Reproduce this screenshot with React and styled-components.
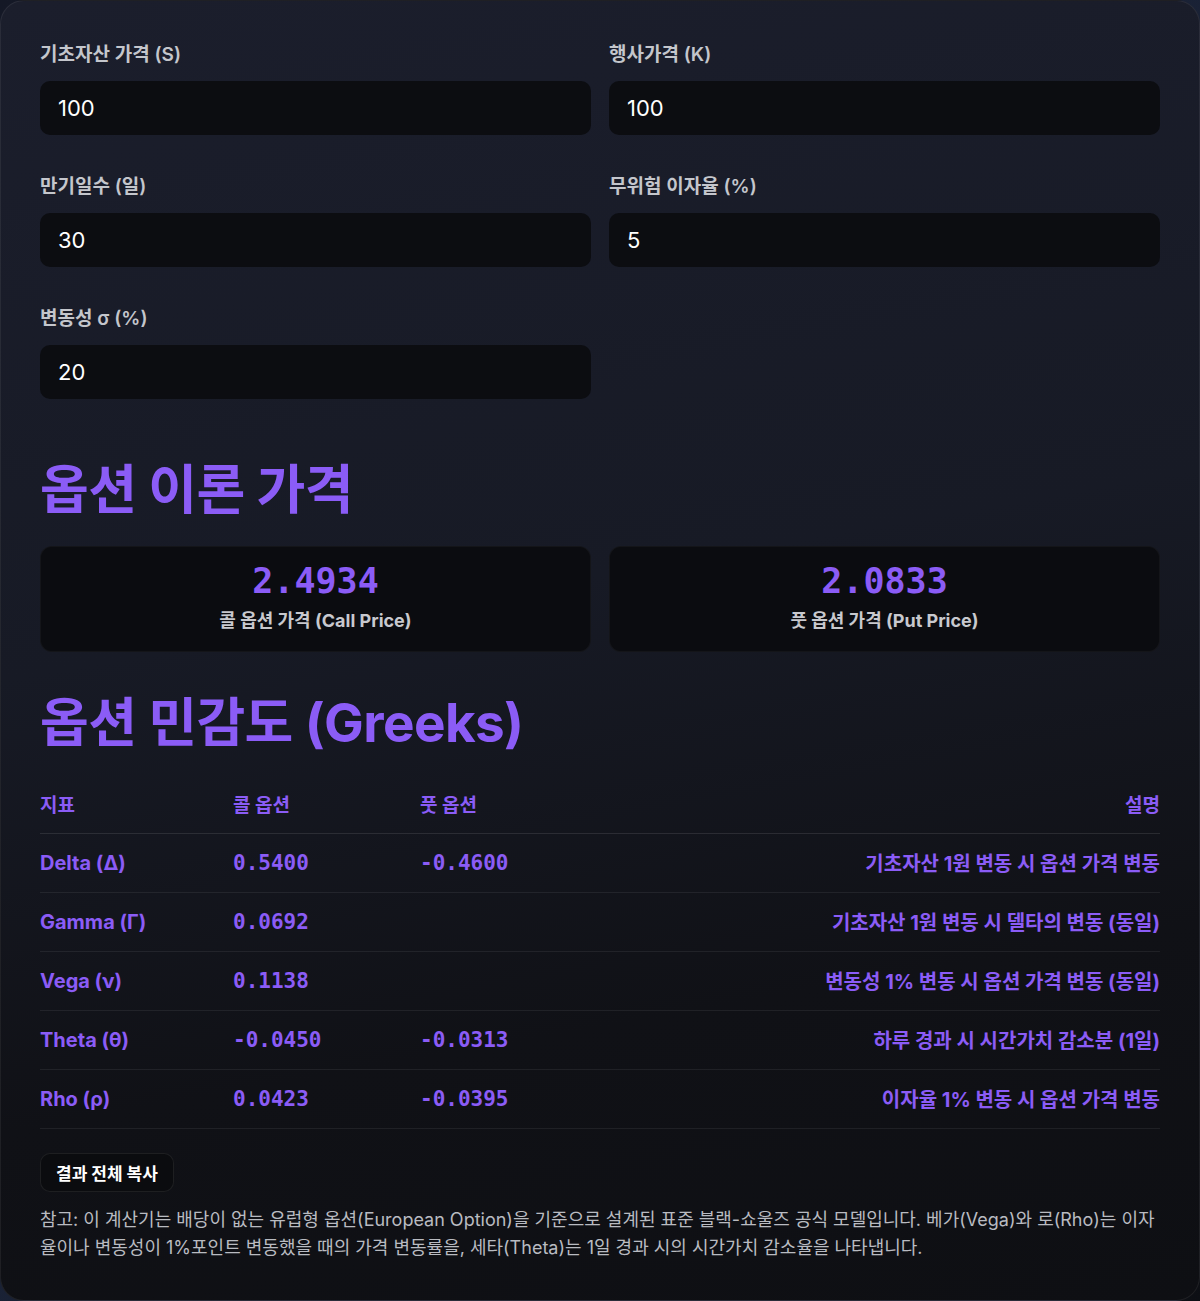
import styled, { createGlobalStyle } from 'styled-components';

const GlobalStyle = createGlobalStyle`
  html, body {
    margin: 0;
    padding: 0;
    background: linear-gradient(135deg, #141826 0%, #1a2236 50%, #0d0f14 100%);
    font-family: Inter, "Noto Sans CJK KR", sans-serif;
    -webkit-font-smoothing: antialiased;
  }
  * { box-sizing: border-box; }
`;

const fields = [
  { label: '기초자산 가격 (S)', value: '100' },
  { label: '행사가격 (K)', value: '100' },
  { label: '만기일수 (일)', value: '30' },
  { label: '무위험 이자율 (%)', value: '5' },
  { label: '변동성 σ (%)', value: '20' },
];

const greeks = [
  { name: 'Delta (Δ)', call: '0.5400', put: '-0.4600', desc: '기초자산 1원 변동 시 옵션 가격 변동' },
  { name: 'Gamma (Γ)', call: '0.0692', put: '', desc: '기초자산 1원 변동 시 델타의 변동 (동일)' },
  { name: 'Vega (ν)', call: '0.1138', put: '', desc: '변동성 1% 변동 시 옵션 가격 변동 (동일)' },
  { name: 'Theta (θ)', call: '-0.0450', put: '-0.0313', desc: '하루 경과 시 시간가치 감소분 (1일)' },
  { name: 'Rho (ρ)', call: '0.0423', put: '-0.0395', desc: '이자율 1% 변동 시 옵션 가격 변동' },
];

export default function App() {
  return (
    <>
      <GlobalStyle />
      <Card>
        <FieldGrid>
          {fields.map((f) => (
            <Field key={f.label}>
              <Label>{f.label}</Label>
              <Input defaultValue={f.value} />
            </Field>
          ))}
        </FieldGrid>

        <Heading $top={59}>옵션 이론 가격</Heading>
        <PriceGrid>
          <PriceBox>
            <PriceValue>2.4934</PriceValue>
            <PriceLabel>콜 옵션 가격 (Call Price)</PriceLabel>
          </PriceBox>
          <PriceBox>
            <PriceValue>2.0833</PriceValue>
            <PriceLabel>풋 옵션 가격 (Put Price)</PriceLabel>
          </PriceBox>
        </PriceGrid>

        <Heading $top={39}>옵션 민감도 (Greeks)</Heading>
        <Table>
          <thead>
            <tr>
              <Th>지표</Th>
              <Th>콜 옵션</Th>
              <Th>풋 옵션</Th>
              <Th $right>설명</Th>
            </tr>
          </thead>
          <tbody>
            {greeks.map((g) => (
              <tr key={g.name}>
                <Td>{g.name}</Td>
                <Td $mono>{g.call}</Td>
                <Td $mono>{g.put}</Td>
                <Td $right>{g.desc}</Td>
              </tr>
            ))}
          </tbody>
        </Table>

        <CopyButton>결과 전체 복사</CopyButton>
        <Note>
          참고: 이 계산기는 배당이 없는 유럽형 옵션(European Option)을 기준으로 설계된 표준 블랙-쇼울즈 공식 모델입니다. 베가(Vega)와 로(Rho)는 이자율이나 변동성이 1%포인트 변동했을 때의 가격 변동률을, 세타(Theta)는 1일 경과 시의 시간가치 감소율을 나타냅니다.
        </Note>
      </Card>
    </>
  );
}

const Card = styled.div`
  width: 1200px;
  min-height: 1298px;
  padding: 40px 39px 38px 39px;
  border-radius: 24px;
  border: 1px solid rgba(255, 255, 255, 0.07);
  background: linear-gradient(170deg, #1b1e2c 0%, #171a25 45%, #101116 75%, #0e0f13 100%);
`;

const FieldGrid = styled.div`
  display: grid;
  grid-template-columns: 1fr 1fr;
  column-gap: 18px;
  row-gap: 38px;
`;

const Field = styled.div`
  display: flex;
  flex-direction: column;
  gap: 13px;
`;

const Label = styled.label`
  color: #c4c6cc;
  font-size: 19px;
  font-weight: 600;
  line-height: 27px;
`;

const Input = styled.input`
  height: 54px;
  border: none;
  outline: none;
  border-radius: 10px;
  background: #0c0d11;
  color: #ffffff;
  font-family: Inter, "Noto Sans CJK KR", sans-serif;
  font-size: 22px;
  padding: 0 18px;
`;

const Heading = styled.h2`
  margin: ${(p) => p.$top}px 0 24px 0;
  color: #8b5cf6;
  font-size: 53px;
  font-weight: 700;
  line-height: 64px;
  letter-spacing: -0.6px;
`;

const PriceGrid = styled.div`
  display: grid;
  grid-template-columns: 1fr 1fr;
  gap: 18px;
`;

const PriceBox = styled.div`
  height: 106px;
  border-radius: 12px;
  background: #0b0c10;
  border: 1px solid rgba(255, 255, 255, 0.04);
  display: flex;
  flex-direction: column;
  align-items: center;
  padding-top: 14px;
  gap: 8px;
`;

const PriceValue = styled.div`
  color: #8b5cf6;
  font-family: "DejaVu Sans Mono", monospace;
  font-size: 35px;
  font-weight: 700;
  line-height: 40px;
`;

const PriceLabel = styled.div`
  color: #c8c9ce;
  font-size: 18px;
  font-weight: 700;
  line-height: 24px;
`;

const Table = styled.table`
  width: 100%;
  border-collapse: collapse;
  margin-top: -4px;
`;

const Th = styled.th`
  text-align: ${(p) => (p.$right ? 'right' : 'left')};
  color: #8b5cf6;
  font-size: 19px;
  font-weight: 700;
  height: 58px;
  padding: 0;
  border-bottom: 1px solid rgba(255, 255, 255, 0.1);
  &:nth-child(1) { width: 193px; }
  &:nth-child(2) { width: 187px; }
`;

const Td = styled.td`
  text-align: ${(p) => (p.$right ? 'right' : 'left')};
  color: #8b5cf6;
  font-family: ${(p) => (p.$mono ? '"DejaVu Sans Mono", monospace' : 'Inter, "Noto Sans CJK KR", sans-serif')};
  font-size: ${(p) => (p.$mono ? '21px' : '20px')};
  font-weight: 700;
  height: 59px;
  padding: 0;
  border-bottom: 1px solid rgba(255, 255, 255, 0.07);
`;

const CopyButton = styled.button`
  margin-top: 24px;
  height: 39px;
  padding: 0 15px;
  border-radius: 10px;
  border: 1px solid rgba(255, 255, 255, 0.08);
  background: #0b0c0f;
  color: #ffffff;
  font-family: Inter, "Noto Sans CJK KR", sans-serif;
  font-size: 17px;
  font-weight: 700;
  cursor: pointer;
`;

const Note = styled.p`
  margin: 14px 0 0 0;
  color: #b9bbc1;
  font-size: 18px;
  line-height: 28px;
`;
